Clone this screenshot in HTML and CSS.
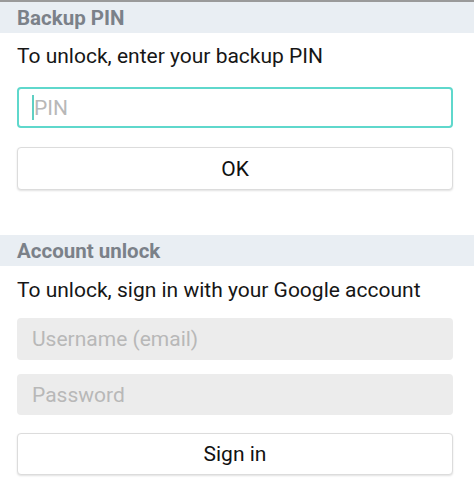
FILE: index.html
```html
<!DOCTYPE html>
<html>
<head>
<meta charset="utf-8">
<link rel="stylesheet" href="styles.css">
</head>
<body>
<div class="topbar"></div>
<section class="section first">
  <div class="header"><span>Backup PIN</span></div>
  <div class="content">
    <p class="desc">To unlock, enter your backup PIN</p>
    <div class="field focused pin"><span class="caret"></span><span class="ph">PIN</span></div>
    <div class="btn ok">OK</div>
  </div>
</section>
<section class="section second">
  <div class="header"><span>Account unlock</span></div>
  <div class="content">
    <p class="desc">To unlock, sign in with your Google account</p>
    <div class="field filled user"><span class="ph">Username (email)</span></div>
    <div class="field filled pass"><span class="ph">Password</span></div>
    <div class="btn signin">Sign in</div>
  </div>
</section>
</body>
</html>
```
FILE: styles.css
```css
* { box-sizing: border-box; }
html, body { margin: 0; padding: 0; background: #fff; }
body {
  width: 474px;
  height: 489px;
  overflow: hidden;
  font-family: Roboto, "Liberation Sans", sans-serif;
  color: #111;
}
.topbar { height: 2px; background: #9a9a9a; }
.header {
  height: 31px;
  background: #e9eef3;
  padding-left: 17px;
  display: flex;
  align-items: center;
  font-size: 20.5px;
  font-weight: 700;
  color: #7b8189;
}
.content { padding: 0 21px 0 17px; }
.desc {
  margin: 0;
  padding-top: 11px;
  font-size: 21px;
  line-height: 24px;
  color: #161616;
}
.second .desc { padding-top: 12px; }
.field {
  height: 41px;
  border-radius: 4px;
  display: flex;
  align-items: center;
  padding-left: 15px;
  font-size: 21px;
}
.field.focused { border: 2px solid #5fd8cc; padding-left: 13px; }
.pin { margin-top: 19px; }
.caret { width: 2px; height: 25px; background: #5fcfc3; margin-right: 0; }
.ph { color: #b8b8b8; }
.field.filled { background: #ececec; }
.user { margin-top: 16px; height: 42px; }
.pass { margin-top: 14px; }
.btn {
  height: 42px;
  border: 1px solid #dcdcdc;
  border-radius: 4px;
  box-shadow: 0 1px 2px rgba(0,0,0,0.12);
  background: #fff;
  display: flex;
  align-items: center;
  justify-content: center;
  font-size: 21px;
  color: #111;
}
.ok { margin-top: 19px; height: 43px; }
.signin { margin-top: 18px; }
.section.second { margin-top: 45px; }
```
